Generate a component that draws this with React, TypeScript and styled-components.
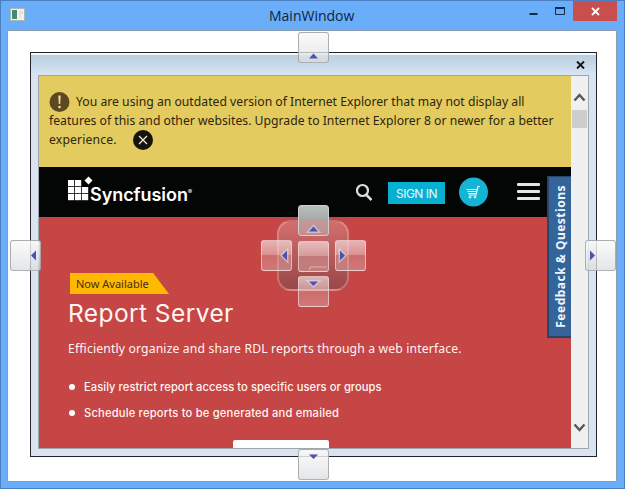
import React from "react";
import styled, { createGlobalStyle, css } from "styled-components";

const Global = createGlobalStyle`
  * { box-sizing: border-box; }
  body { margin: 0; overflow: hidden; }
`;

const Window = styled.div`
  position: relative;
  width: 625px;
  height: 489px;
  display: flex;
  flex-direction: column;
  padding: 0 7px 6px 6px;
  background: #6aadf8;
  border: 1px solid #4a80c2;
  font-family: "Noto Sans", sans-serif;
`;

const TitleBar = styled.div`
  height: 29px;
  flex: none;
  display: flex;
  align-items: flex-start;
  padding-left: 3px;
`;

const AppIcon = styled.svg`
  width: 15px;
  height: 13px;
  margin-top: 7px;
`;

const Title = styled.div`
  flex: 1;
  padding: 5px 0 0 244px;
  font: 14px/20px "Open Sans", sans-serif;
  letter-spacing: 0;
  color: #10243c;
  white-space: nowrap;
`;

const Controls = styled.div`
  display: flex;
  svg { display: block; }
`;

const Control = styled.div<{ $w: number; $danger?: boolean }>`
  width: ${(p) => p.$w}px;
  height: 20px;
  background: ${(p) => (p.$danger ? "#c94f4e" : "transparent")};
`;

const Client = styled.div`
  flex: 1;
  background: #fff;
  border: 1px solid #8a9db3;
  padding: 21px 19px 23px 22px;
`;

const DockPane = styled.div`
  height: 405px;
  display: flex;
  flex-direction: column;
  border: 1px solid #202630;
  padding: 1px 7px 7px;
  background: #d9e4f0;
  box-shadow: inset 0 2px #f4f8fb;
`;

const PaneHeader = styled.div`
  height: 20px;
  margin: 1px -7px 0;
  flex: none;
  display: flex;
  justify-content: flex-end;
  padding: 6px 11px 0 0;
  background: linear-gradient(#b9cede, #d8e5f3);
`;

const Browser = styled.div`
  flex: 1;
  display: flex;
  min-height: 0;
  border: 1px solid #9fa6ac;
`;

const Page = styled.div`
  position: relative;
  flex: 1;
  min-width: 0;
  display: flex;
  flex-direction: column;
  overflow: hidden;
  white-space: nowrap;
`;

const Scrollbar = styled.div`
  width: 17px;
  display: flex;
  flex-direction: column;
  align-items: center;
  background: #f0f0f0;
  padding: 16px 0 15px;
`;

const Thumb = styled.div`
  width: 15px;
  height: 18px;
  margin-top: 7px;
  margin-bottom: auto;
  background: #cdcdcd;
`;

const Banner = styled.div`
  height: 91px;
  flex: none;
  padding: 16px 0 0 10px;
  background: #e3cb60;
  color: #2d260c;
  font-size: 12.2px;
`;

const BannerLine = styled.div<{ $gap: number; $spacing: number }>`
  height: 19px;
  display: flex;
  align-items: center;
  gap: ${(p) => p.$gap}px;
  letter-spacing: ${(p) => p.$spacing}px;
  svg { flex: none; }
`;

const SiteHeader = styled.div`
  height: 50px;
  flex: none;
  display: flex;
  align-items: center;
  padding-left: 29px;
  background: #040605;
`;

const Logo = styled.div`
  display: flex;
  width: 287px;
  color: #fff;
  svg { margin-top: 0; }
`;

const LogoText = styled.span`
  margin: 6px 0 0 -3px;
  font: 600 18px/26px Inter, sans-serif;
  letter-spacing: -0.05px;
  sup { font-size: 6px; line-height: 0; vertical-align: 7px; letter-spacing: 0; }
`;

const SignIn = styled.div`
  width: 57px;
  height: 22px;
  margin: 2px 14px 0 16px;
  background: #07b0d0;
  color: #e9fbff;
  text-align: center;
  font: 12px/23px Inter, sans-serif;
  letter-spacing: -0.5px;
`;

const Menu = styled.div`
  display: flex;
  flex-direction: column;
  gap: 4px;
  margin: -2px 0 0 28px;
`;

const MenuBar = styled.i`
  width: 23px;
  height: 3px;
  border-radius: 1px;
  background: #e4e5e5;
`;

const Hero = styled.div`
  flex: 1;
  min-height: 0;
  padding: 56px 0 0 29px;
  background: #c64545;
  color: #fff5f3;
`;

const Tag = styled.div`
  width: 99px;
  height: 21px;
  margin-left: 2px;
  padding-left: 6px;
  background: #ffb900;
  clip-path: polygon(0 0, 84% 0, 100% 100%, 0 100%);
  color: #4b2d0c;
  font-size: 11px;
  line-height: 22px;
`;

const Headline = styled.div`
  height: 38px;
  font: 24.5px/38px Inter, sans-serif;
  letter-spacing: 0.42px;
`;

const Lead = styled.div`
  height: 34px;
  font-size: 12.2px;
  letter-spacing: 0.15px;
  line-height: 34px;
`;

const Features = styled.ul`
  list-style: none;
  margin: 8px 0 0;
  padding: 0;
`;

const Feature = styled.li<{ $spacing: number }>`
  height: 26px;
  display: flex;
  align-items: center;
  gap: 9px;
  font: 500 11.2px/26px Inter, sans-serif;
  letter-spacing: ${(p) => p.$spacing}px;
  &::before {
    content: "";
    width: 6px;
    height: 6px;
    margin-left: 1px;
    border-radius: 50%;
    background: #fff;
  }
`;

const HeroButton = styled.div`
  width: 96px;
  height: 20px;
  margin: 14px 0 0 165px;
  border-radius: 2px;
  background: #fff;
`;

const FeedbackTab = styled.div`
  position: absolute;
  top: 100px;
  right: 0;
  width: 24px;
  height: 162px;
  border: solid #27446b;
  border-width: 1px 0 2px 2px;
  background: #34659a;
  color: #eef6ff;
  writing-mode: vertical-rl;
  display: flex;
  align-items: center;
  justify-content: center;
  span {
    transform: rotate(180deg);
    margin: 0 0 1px 1px;
    font: 700 12px/20px "Noto Sans", sans-serif;
    letter-spacing: 0.5px;
  }
`;

const solid = css`
  background: linear-gradient(rgba(250,250,250,.85), rgba(218,220,222,.72));
  border-color: rgba(150,153,158,.75);
`;

const glass = css`
  background: linear-gradient(rgba(245,225,225,.7), rgba(240,205,205,.55) 48%, rgba(215,165,165,.42) 50%, rgba(225,180,180,.45));
  border-color: rgba(245,220,220,.65);
`;

const dim = css`
  background: linear-gradient(#b8c0be, #a5acaa 43%, #c19b9c 46%, #c28e90);
  border-color: #ccd0cf;
`;

const finishes = { solid, glass, dim };
type Finish = keyof typeof finishes;

const DockTarget = styled.div<{ $x: number; $y: number; $finish: Finish }>`
  position: absolute;
  left: ${(p) => p.$x - 1}px;
  top: ${(p) => p.$y - 1}px;
  width: 31px;
  height: 31px;
  border: 1px solid;
  border-radius: 3px;
  ${(p) => finishes[p.$finish]}
  svg { display: block; }
`;

const CompassPlate = styled.div`
  position: absolute;
  left: 276px;
  top: 219px;
  width: 72px;
  height: 71px;
  border: 2px solid rgba(240,175,175,.42);
  border-radius: 14px;
  background: linear-gradient(rgba(225,150,150,.5), rgba(105,75,75,.48));
`;

type Dir = "up" | "down" | "left" | "right" | "center";

const arrows: Record<Dir, string> = {
  up: "M10 25.5 14.5 20.5 19 25.5z",
  down: "M10 4.5 14.5 9 19 4.5z",
  left: "M25 9.5 20 14.5 25 19.5z",
  right: "M4 9.5 9 14.5 4 19.5z",
  center: "",
};

const Target = ({ x, y, dir, finish = "solid" }: { x: number; y: number; dir: Dir; finish?: Finish }) => (
  <DockTarget $x={x} $y={y} $finish={finish}>
    <svg width="29" height="29">
      {dir === "center" ? (
        <path d="M11 28v-3h17" fill="none" stroke="#e9c6c7" opacity=".7" />
      ) : (
        <path
          d={arrows[dir]}
          fill="#4656b0"
          stroke="#e2dcea"
          strokeWidth={finish === "solid" ? 1 : 3}
          strokeOpacity=".55"
          paintOrder="stroke"
        />
      )}
    </svg>
  </DockTarget>
);

const gridCells = [
  [0, 4], [7, 4],
  [0, 11], [7, 11], [14, 11],
  [0, 18], [7, 18], [14, 18],
];

export default function App() {
  return (
    <>
      <Global />
      <Window>
        <TitleBar>
          <AppIcon viewBox="0 0 15 13">
            <rect x=".5" y=".5" width="14" height="12" fill="#f2f3ef" stroke="#adb5b7" />
            <rect x="2" y="2" width="5" height="9" fill="#438b78" />
            <path d="M10 3v7M12 3v3" stroke="#cfd2ce" />
          </AppIcon>
          <Title>MainWindow</Title>
          <Controls>
            <Control $w={26}>
              <svg width="26" height="20"><path d="M3.500 13h8" stroke="#102b4c" strokeWidth="2" /></svg>
            </Control>
            <Control $w={21}>
              <svg width="21" height="20">
                <path d="M3.500 6.500h9v7h-9z" fill="none" stroke="#102b4c" />
                <path d="M3 7h10" stroke="#102b4c" strokeWidth="2" />
              </svg>
            </Control>
            <Control $w={44} $danger>
              <svg width="44" height="20"><path d="m19 7 7 7m0-7-7 7" stroke="#fff" strokeWidth="1.800" /></svg>
            </Control>
          </Controls>
        </TitleBar>
        <Client>
          <DockPane>
            <PaneHeader>
              <svg width="9" height="8"><path d="m1 .5 7 7M8 .5l-7 7" stroke="#10141a" strokeWidth="1.900" /></svg>
            </PaneHeader>
            <Browser>
              <Page>
                <Banner>
                  <BannerLine $gap={6} $spacing={0.01}>
                    <svg width="21" height="21">
                      <circle cx="10.500" cy="11" r="10" fill="#5c4921" />
                      <path d="M9.300 4.500h2.400l-.5 8.500h-1.400z" fill="#eddca0" />
                      <circle cx="10.500" cy="16" r="1.300" fill="#eddca0" />
                    </svg>
                    You are using an outdated version of Internet Explorer that may not display all
                  </BannerLine>
                  <BannerLine $gap={0} $spacing={0.01}>
                    features of this and other websites. Upgrade to Internet Explorer 8 or newer for a better
                  </BannerLine>
                  <BannerLine $gap={16} $spacing={0.15}>
                    experience.
                    <svg width="20" height="20">
                      <circle cx="10" cy="10" r="10" fill="#15130d" />
                      <path d="m6 6 8 8m0-8-8 8" stroke="#eee8d4" strokeWidth="1.300" />
                    </svg>
                  </BannerLine>
                </Banner>
                <SiteHeader>
                  <Logo>
                    <svg width="25" height="26" fill="#fff">
                      {gridCells.map(([x, y]) => (
                        <rect key={`${x}-${y}`} x={x} y={y} width="6.200" height="6.200" />
                      ))}
                      <path d="m20.500.5 4 4-4 4-4-4z" />
                    </svg>
                    <LogoText>Syncfusion<sup>®</sup></LogoText>
                  </Logo>
                  <svg width="17" height="18" fill="none" stroke="#dedede">
                    <circle cx="7.500" cy="7.500" r="5.500" strokeWidth="2.200" />
                    <path d="m11.500 12 5 5" strokeWidth="2.500" />
                  </svg>
                  <SignIn>SIGN IN</SignIn>
                  <svg width="30" height="30" fill="none" stroke="#effcff">
                    <circle cx="14.500" cy="15" r="14.500" fill="#14b4d4" stroke="none" />
                    <path d="M21 9.500h-2l-2 8.500h-7M7.500 12.500h10M8.500 14.500h9M9 16.500h8" strokeWidth="1.200" />
                    <circle cx="11" cy="20" r="1" />
                    <circle cx="16" cy="20" r="1" />
                  </svg>
                  <Menu><MenuBar /><MenuBar /><MenuBar /></Menu>
                </SiteHeader>
                <Hero>
                  <Tag>Now Available</Tag>
                  <Headline>Report Server</Headline>
                  <Lead>Efficiently organize and share RDL reports through a web interface.</Lead>
                  <Features>
                    <Feature $spacing={0.05}>Easily restrict report access to specific users or groups</Feature>
                    <Feature $spacing={0.18}>Schedule reports to be generated and emailed</Feature>
                  </Features>
                  <HeroButton />
                </Hero>
                <FeedbackTab><span>Feedback &amp; Questions</span></FeedbackTab>
              </Page>
              <Scrollbar>
                <svg width="13" height="11"><path d="m1.500 8.500 5-5.500 5 5.500" fill="none" stroke="#55585b" strokeWidth="2.500" /></svg>
                <Thumb />
                <svg width="13" height="11"><path d="m1.500 2.500 5 5.500 5-5.500" fill="none" stroke="#55585b" strokeWidth="2.500" /></svg>
              </Scrollbar>
            </Browser>
          </DockPane>
        </Client>
        <Target x={298} y={32} dir="up" />
        <Target x={10} y={240} dir="left" />
        <Target x={585} y={240} dir="right" />
        <Target x={298} y={449} dir="down" />
        <CompassPlate />
        <Target x={298} y={205} dir="up" finish="dim" />
        <Target x={261} y={240} dir="left" finish="glass" />
        <Target x={298} y={241} dir="center" finish="glass" />
        <Target x={335} y={240} dir="right" finish="glass" />
        <Target x={298} y={276} dir="down" finish="glass" />
      </Window>
    </>
  );
}
